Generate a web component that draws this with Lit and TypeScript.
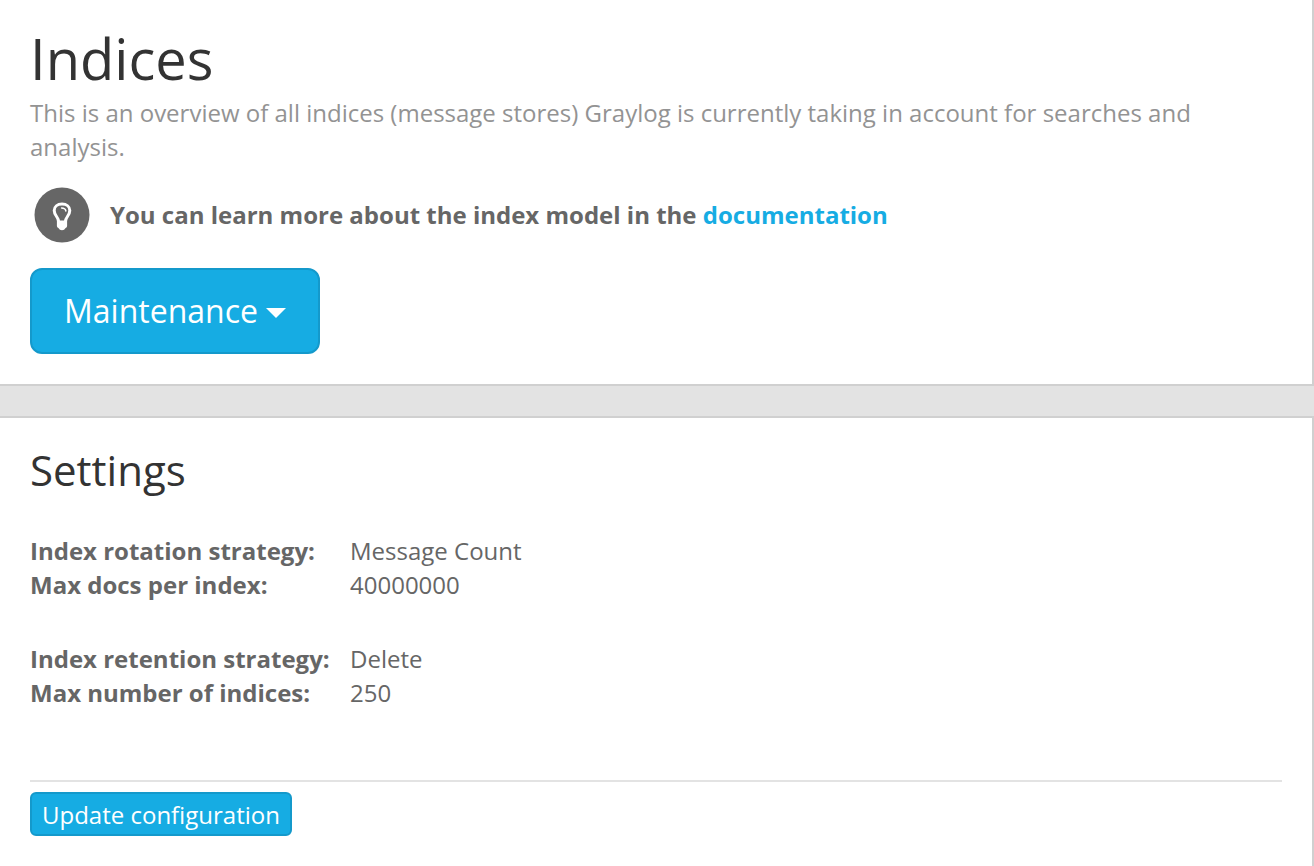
import { LitElement, html, css } from "lit";
import { customElement } from "lit/decorators.js";

interface Setting {
  label: string;
  value: string;
}

const strategies: Setting[][] = [
  [
    { label: "Index rotation strategy:", value: "Message Count" },
    { label: "Max docs per index:", value: "40000000" },
  ],
  [
    { label: "Index retention strategy:", value: "Delete" },
    { label: "Max number of indices:", value: "250" },
  ],
];

@customElement("app-root")
export class AppRoot extends LitElement {
  static styles = css`
    :host {
      display: block;
      min-height: 100vh;
      background: #e3e3e3;
      color: #666;
      font: 24px/34px "Open Sans", "Noto Sans", sans-serif;
    }
    * {
      box-sizing: border-box;
    }
    .page {
      display: flex;
      flex-direction: column;
      gap: 30px;
      min-height: 100vh;
    }
    .panel {
      background: #fff;
      border-right: 2px solid #d0d0d0;
      padding: 30px;
    }
    .intro {
      border-bottom: 2px solid #d0d0d0;
    }
    .settings {
      border-top: 2px solid #d0d0d0;
      flex: 1;
    }
    h1,
    h2,
    p,
    dl,
    dd {
      margin: 0;
      font-weight: 400;
    }
    h1 {
      font-size: 56px;
      line-height: 56px;
      color: #333;
      margin-bottom: 10px;
    }
    h2 {
      font-size: 42px;
      line-height: 44px;
      color: #333;
      margin-bottom: 42px;
    }
    .description {
      color: #939393;
    }
    .support {
      display: flex;
      align-items: center;
      gap: 20px;
      padding: 0 4px;
      margin: 23px 0 25px;
      font-weight: 700;
    }
    .bulb {
      width: 56px;
      height: 56px;
      flex: none;
    }
    a {
      color: #16ace3;
      text-decoration: none;
    }
    button {
      display: inline-flex;
      align-items: center;
      justify-content: center;
      font-family: inherit;
      color: #fff;
      background: #16ace3;
      border: 2px solid #1499cb;
      cursor: pointer;
    }
    .large {
      font-size: 32px;
      line-height: 42px;
      padding: 20px 32px;
      border-radius: 12px;
      gap: 8px;
    }
    .caret {
      border: 10px solid transparent;
      border-top-color: #fff;
      border-bottom: 0;
      margin-top: 4px;
    }
    .small {
      font-size: 24px;
      line-height: 36px;
      padding: 3px 10px 1px;
      border-radius: 6px;
    }
    .group {
      display: grid;
      grid-template-columns: 320px 1fr;
      margin-bottom: 40px;
    }
    dt {
      font-weight: 700;
    }
    hr {
      border: 0;
      border-top: 2px solid #e3e3e3;
      margin: 70px 0 10px;
    }
  `;

  render() {
    return html`
      <main class="page">
        <section class="panel intro">
          <h1>Indices</h1>
          <p class="description">
            This is an overview of all indices (message stores) Graylog is currently taking in
            account for searches and analysis.
          </p>
          <div class="support">
            <svg class="bulb" viewBox="0 0 56 56" aria-hidden="true">
              <circle cx="28" cy="28" r="27.5" fill="#666" />
              <path
                d="M24.6 34.5C24.4 29.8 20.2 28.5 20.2 23.6C20.2 19.6 23.5 17.1 28 17.1S35.8 19.6 35.8 23.6C35.8 28.5 31.6 29.8 31.4 34.5"
                fill="none"
                stroke="#fff"
                stroke-width="3"
              />
              <path
                d="M27.6 21C29.8 21 31.5 22.1 31.9 24"
                fill="none"
                stroke="#fff"
                stroke-width="1.5"
                stroke-linecap="round"
              />
              <path
                d="M22.9 33.4H33.1V39Q33.1 40.3 31.6 41Q30.4 43.2 28 43.2T24.4 41Q22.9 40.3 22.9 39Z"
                fill="#fff"
              />
            </svg>
            <p><b>You can learn more about the index model in the <a href="#">documentation</a></b></p>
          </div>
          <button class="large" type="button" aria-haspopup="menu">
            Maintenance<span class="caret"></span>
          </button>
        </section>
        <section class="panel settings">
          <h2>Settings</h2>
          ${strategies.map(
            (group) => html`
              <dl class="group">
                ${group.map(({ label, value }) => html`<dt>${label}</dt><dd>${value}</dd>`)}
              </dl>
            `
          )}
          <hr />
          <button class="small" type="button">Update configuration</button>
        </section>
      </main>
    `;
  }
}
